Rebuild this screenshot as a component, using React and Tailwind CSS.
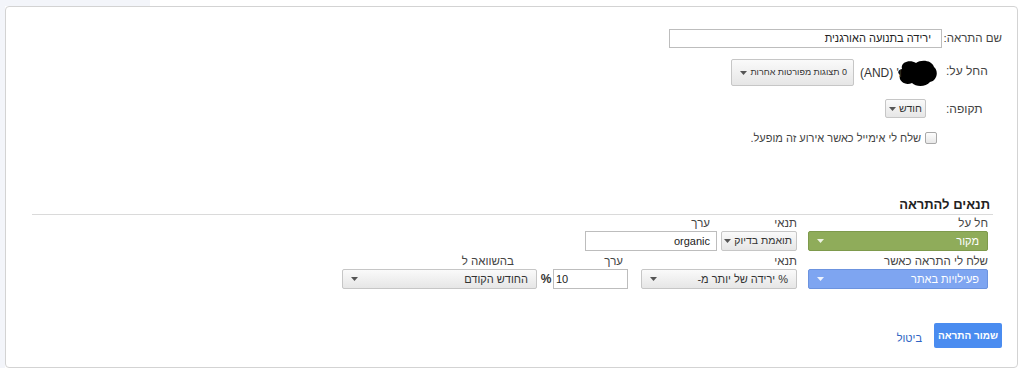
import React from "react";

const Caret = ({ color = "#555" }) => (
  <svg width="7" height="4" viewBox="0 0 7 4" className="shrink-0">
    <polygon points="0,0 7,0 3.5,4" fill={color} />
  </svg>
);

const Blob = () => (
  <svg width="42" height="28" viewBox="0 0 42 28" className="shrink-0">
    <path
      d="M6,10 C4,3 14,0 20,4 C25,0 36,1 38,8 C43,12 41,22 34,23 C30,28 20,28 16,24 C9,27 2,22 4,16 C1,14 2,11 6,10 Z"
      fill="#000"
    />
  </svg>
);

const grayBtn =
  "flex items-center whitespace-nowrap border border-[#c6c6c6] rounded-[2px] bg-linear-to-b from-[#fafafa] to-[#e6e6e6] text-[#333]";

export default function App() {
  return (
    <div className="w-[1024px] h-[376px] bg-white overflow-hidden whitespace-nowrap font-['Liberation_Sans','DejaVu_Sans',sans-serif]">
      <div className="h-[6px] flex">
        <div className="w-[150px] h-full bg-[#f3f5fa]" />
      </div>
      <div className="flex">
        <div className="w-[5px] h-[362px] bg-[#f3f5fa]" />
        <div
          dir="rtl"
          className="w-[1013px] h-[362px] border border-[#d3d3d3] rounded-[4px] bg-white flex flex-col"
        >
          {/* top form */}
          <div className="pr-[15px] pt-[22px] text-[12px] text-[#444]">
            <div className="flex items-center h-[19px]">
              <div className="w-[60px] pl-[2px] text-left text-[11.5px]">שם התראה:</div>
              <div className="w-[273px] h-[19px] border border-[#bdbdbd] bg-white pr-[10px] flex items-center text-[11px] text-[#222]">
                ירידה בתנועה האורגנית
              </div>
            </div>

            <div className="mt-[11px] flex items-center h-[27px]">
              <div className="w-[60px] pl-[4px] text-left -mt-[4px]">החל על:</div>
              <div className="mr-[4px] flex items-center">
                <Blob />
              </div>
              <div className="-mr-[6px] text-[12px] text-[#333]">ו' (AND)</div>
              <div className={`mr-[6px] w-[123px] h-[27px] justify-between pr-[6px] pl-[8px] text-[9px] ${grayBtn}`}>
                <span>0 תצוגות מפורטות אחרות</span>
                <Caret />
              </div>
            </div>

            <div className="mt-[13px] flex items-center h-[19px]">
              <div className="w-[60px] pl-[4px] text-left">תקופה:</div>
              <div className={`mr-[16px] h-[19px] px-[3px] gap-[3px] text-[10.5px] ${grayBtn}`}>
                <span>חודש</span>
                <Caret />
              </div>
            </div>

            <div className="mt-[13px] flex items-center h-[14px]">
              <div className="w-[65px]" />
              <div className="w-[12px] h-[12px] border border-[#a9a9a9] rounded-[2px] bg-linear-to-b from-[#fdfdfd] to-[#e8e8e8]" />
              <div className="mr-[4px] text-[11px] text-[#444]">שלח לי אימייל כאשר אירוע זה מופעל.</div>
            </div>
          </div>

          {/* conditions */}
          <div className="mt-[52px] mr-[24px] ml-[26px]">
            <div className="h-[18px] pr-[3px] pb-[2px] border-b border-[#dadada] text-[13px] font-bold text-[#222] leading-[16px]">
              תנאים להתראה
            </div>

            <div className="pr-[5px] text-[11.5px] text-[#444]">
              {/* row 1 */}
              <div className="mt-[2px] flex items-end">
                <div className="w-[180px]">
                  <div className="leading-[13px] mb-[1px]">חל על</div>
                  <div className="h-[20px] flex items-center justify-between px-[8px] bg-[#8fac5a] border border-[#7e9a4c] rounded-[2px] text-white text-[11px]">
                    <span>מקור</span>
                    <Caret color="#eef3e4" />
                  </div>
                </div>
                <div className="mr-[11px] w-[76px]">
                  <div className="leading-[13px] mb-[1px]">תנאי</div>
                  <div className={`h-[20px] px-[4px] gap-[3px] text-[10.5px] ${grayBtn}`}>
                    <span>תואמת בדיוק</span>
                    <Caret />
                  </div>
                </div>
                <div className="mr-[4px] w-[132px]">
                  <div className="leading-[13px] mb-[1px] pr-[7px]">ערך</div>
                  <div className="h-[20px] border border-[#bdbdbd] bg-white flex items-center pr-[6px] text-[11px] text-[#222]">
                    organic
                  </div>
                </div>
              </div>

              {/* row 2 */}
              <div className="mt-[4px] flex items-end">
                <div className="w-[180px]">
                  <div className="leading-[13px] mb-[1px]">שלח לי התראה כאשר</div>
                  <div className="h-[20px] flex items-center justify-between px-[8px] bg-[#7ea5f1] border border-[#6c93df] rounded-[2px] text-white text-[11px]">
                    <span>פעילויות באתר</span>
                    <Caret color="#eef3fd" />
                  </div>
                </div>
                <div className="mr-[11px] w-[156px]">
                  <div className="leading-[13px] mb-[1px]">תנאי</div>
                  <div className={`h-[20px] px-[8px] justify-between text-[11px] ${grayBtn}`}>
                    <span>% ירידה של יותר מ-</span>
                    <Caret />
                  </div>
                </div>
                <div className="mr-[13px] w-[75px]">
                  <div className="leading-[13px] mb-[1px] pr-[5px]">ערך</div>
                  <div dir="ltr" className="h-[20px] border border-[#bdbdbd] bg-white flex items-center pl-[2px] text-[11px] text-[#222]">
                    10
                  </div>
                </div>
                <div className="mr-[1px] w-[12px] h-[20px] flex items-center justify-center text-[12px] font-bold text-[#333]">
                  %
                </div>
                <div className="mr-[3px] w-[195px]">
                  <div className="leading-[13px] mb-[1px] pr-[23px]">בהשוואה ל</div>
                  <div className={`h-[20px] px-[8px] justify-between text-[11px] ${grayBtn}`}>
                    <span>החודש הקודם</span>
                    <Caret />
                  </div>
                </div>
              </div>
            </div>
          </div>

          {/* buttons */}
          <div className="mt-[34px] pr-[15px] flex items-center">
            <div className="w-[68px] h-[25px] bg-[#4a8cf0] rounded-[2px] flex items-center justify-center text-white text-[10px] font-bold">
              שמור התראה
            </div>
            <div className="mr-[12px] mt-[6px] text-[11px] text-[#2f64c3]">ביטול</div>
          </div>
        </div>
      </div>
    </div>
  );
}
